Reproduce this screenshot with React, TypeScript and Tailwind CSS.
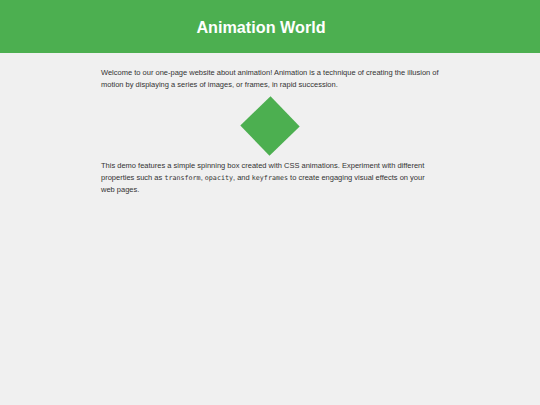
import React from 'react';

export default function App() {
  return (
    <div className="min-h-screen bg-[#f0f0f0] text-[#333] font-['Liberation_Sans',Arial,sans-serif]">
      {/* Header */}
      <header className="h-[53px] bg-[#4caf50] flex items-center justify-center pr-[18px] pt-[1px]">
        <h1 className="text-white text-[16.2px] font-bold">Animation World</h1>
      </header>

      <main className="max-w-[338px] mx-auto pt-[14px]">
        <p className="text-[7.5px] leading-[12px]">
          Welcome to our one-page website about animation! Animation is a technique of creating the illusion of
          motion by displaying a series of images, or frames, in rapid succession.
        </p>

        <div className="flex justify-center my-[13.5px]">
          <div className="w-[42px] h-[42px] bg-[#4caf50] rotate-[46deg]"></div>
        </div>

        <p className="text-[7.5px] leading-[12px]">
          This demo features a simple spinning box created with CSS animations. Experiment with different
          properties such as <code className="font-['DejaVu_Sans_Mono',monospace] text-[6.7px]">transform</code>,{' '}
          <code className="font-['DejaVu_Sans_Mono',monospace] text-[6.7px]">opacity</code>, and{' '}
          <code className="font-['DejaVu_Sans_Mono',monospace] text-[6.7px]">keyframes</code> to create engaging visual
          effects on your web pages.
        </p>
      </main>
    </div>
  );
}
